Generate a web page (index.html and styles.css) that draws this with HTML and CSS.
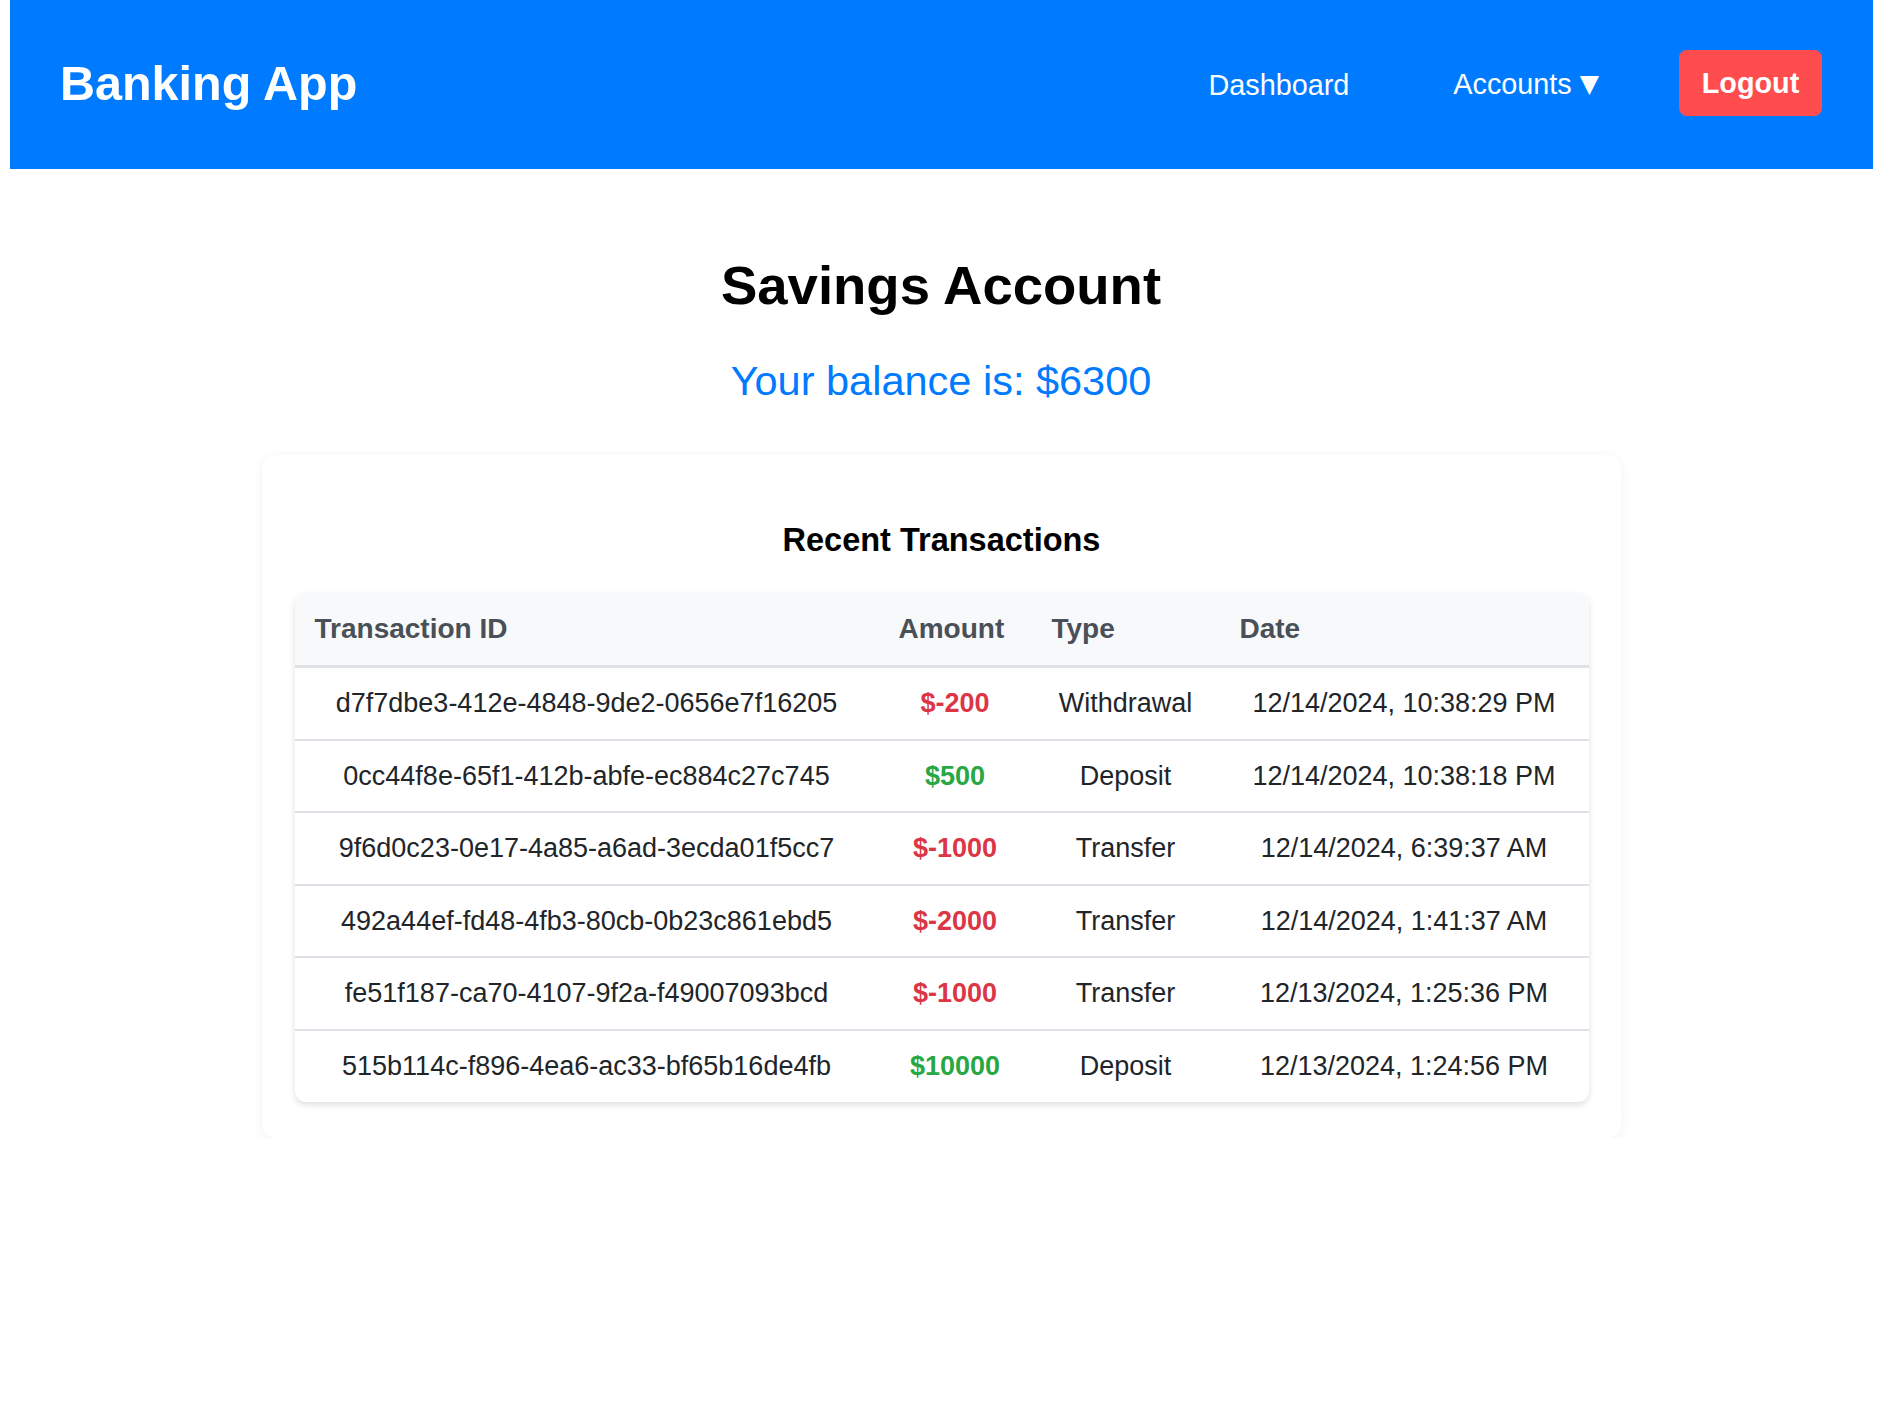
FILE: index.html
```html
<!DOCTYPE html>
<html lang="en">
<head>
<meta charset="utf-8">
<title>Banking App</title>
<link rel="stylesheet" href="styles.css">
</head>
<body>
<header class="navbar">
  <div class="brand">Banking App</div>
  <nav class="nav">
    <a class="nav-link nav-dashboard" href="#">Dashboard</a>
    <a class="nav-link nav-accounts" href="#">Accounts <span class="caret">▼</span></a>
    <button class="logout">Logout</button>
  </nav>
</header>
<main class="page">
  <h1 class="title">Savings Account</h1>
  <p class="balance">Your balance is: $6300</p>
  <section class="card">
    <h3 class="card-title">Recent Transactions</h3>
    <table class="tx-table">
      <colgroup>
        <col class="c-id">
        <col class="c-amount">
        <col class="c-type">
        <col class="c-date">
      </colgroup>
      <thead>
        <tr><th>Transaction ID</th><th>Amount</th><th>Type</th><th>Date</th></tr>
      </thead>
      <tbody>
        <tr><td>d7f7dbe3-412e-4848-9de2-0656e7f16205</td><td class="neg">$-200</td><td>Withdrawal</td><td>12/14/2024, 10:38:29 PM</td></tr>
        <tr><td>0cc44f8e-65f1-412b-abfe-ec884c27c745</td><td class="pos">$500</td><td>Deposit</td><td>12/14/2024, 10:38:18 PM</td></tr>
        <tr><td>9f6d0c23-0e17-4a85-a6ad-3ecda01f5cc7</td><td class="neg">$-1000</td><td>Transfer</td><td>12/14/2024, 6:39:37 AM</td></tr>
        <tr><td>492a44ef-fd48-4fb3-80cb-0b23c861ebd5</td><td class="neg">$-2000</td><td>Transfer</td><td>12/14/2024, 1:41:37 AM</td></tr>
        <tr><td>fe51f187-ca70-4107-9f2a-f49007093bcd</td><td class="neg">$-1000</td><td>Transfer</td><td>12/13/2024, 1:25:36 PM</td></tr>
        <tr><td>515b114c-f896-4ea6-ac33-bf65b16de4fb</td><td class="pos">$10000</td><td>Deposit</td><td>12/13/2024, 1:24:56 PM</td></tr>
      </tbody>
    </table>
  </section>
</main>
</body>
</html>
```
FILE: styles.css
```css
* { box-sizing: border-box; }

body {
  margin: 0;
  font-family: "Liberation Sans", Arial, Helvetica, sans-serif;
  color: #000;
  background: #fff;
}

.navbar {
  margin: 0 9px 0 10px;
  height: 169px;
  background: #007bff;
  color: #fff;
  display: flex;
  align-items: center;
  justify-content: space-between;
  padding: 0 51px 0 50px;
}

.brand {
  font-size: 48.5px;
  font-weight: bold;
  line-height: 56px;
  padding-bottom: 4px;
}

.nav {
  display: flex;
  align-items: center;
}

.nav-link {
  color: #fff;
  text-decoration: none;
  font-size: 28.8px;
  line-height: 34px;
}

.nav-accounts { margin-left: 104px; }

.caret {
  font-family: "DejaVu Sans", sans-serif;
  font-size: 25px;
  position: relative;
  top: -2px;
}

.logout {
  margin-left: 80px;
  width: 143px;
  height: 66px;
  border: none;
  border-radius: 8px;
  background: #ff4d4f;
  color: #fff;
  font-family: "Liberation Sans", Arial, Helvetica, sans-serif;
  font-size: 28.8px;
  font-weight: bold;
  padding: 0;
  margin-bottom: 3px;
}

.page {
  padding-top: 86px;
  text-align: center;
}

.title {
  margin: 0;
  font-size: 54.5px;
  line-height: 62px;
  font-weight: bold;
}

.balance {
  margin: 40px 0 0;
  font-size: 41.5px;
  line-height: 48px;
  color: #007bff;
}

.card {
  width: 1359px;
  margin: 50px auto 0;
  padding: 34px 32px 36px 33px;
  background: #fff;
  border-radius: 14px;
  box-shadow: 0 2px 12px rgba(0, 0, 0, 0.06);
}

.card-title {
  margin: 33px 0 34px;
  font-size: 32.5px;
  line-height: 37px;
  font-weight: bold;
}

.tx-table {
  width: 1294px;
  table-layout: fixed;
  border-collapse: separate;
  border-spacing: 0;
  border-radius: 11px;
  overflow: hidden;
  box-shadow: 0 3px 6px rgba(0, 0, 0, 0.12);
  background: #fff;
}

.c-id { width: 584px; }
.c-amount { width: 153px; }
.c-type { width: 188px; }
.c-date { width: 369px; }

.tx-table th {
  background: #f8f9fa;
  color: #495057;
  font-size: 28px;
  line-height: 32px;
  font-weight: bold;
  text-align: left;
  padding: 20px 20px;
  border-bottom: 3px solid #dee2e6;
  white-space: nowrap;
}

.tx-table td {
  color: #212529;
  font-size: 27px;
  line-height: 31px;
  text-align: center;
  padding: 20px 8px 19.6px;
  border-bottom: 2px solid #dee2e6;
  white-space: nowrap;
}

.tx-table tbody tr:last-child td { border-bottom: none; }

.tx-table td.neg { color: #dc3545; font-weight: bold; }
.tx-table td.pos { color: #28a745; font-weight: bold; }
```
